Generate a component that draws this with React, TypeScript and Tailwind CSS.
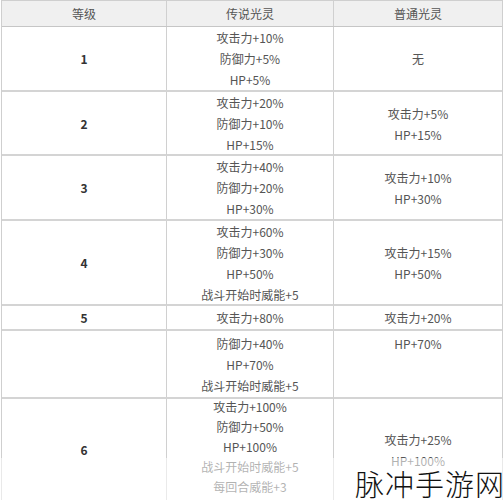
import React from "react";

type Row = {
  level: string;
  legend: string[];
  normal: string[];
  h: string;
  normalTop?: boolean;
  tight?: boolean;
};

const rows: Row[] = [
  { level: "1", legend: ["攻击力+10%", "防御力+5%", "HP+5%"], normal: ["无"], h: "h-[65px]" },
  { level: "2", legend: ["攻击力+20%", "防御力+10%", "HP+15%"], normal: ["攻击力+5%", "HP+15%"], h: "h-[64px]" },
  { level: "3", legend: ["攻击力+40%", "防御力+20%", "HP+30%"], normal: ["攻击力+10%", "HP+30%"], h: "h-[65px]" },
  {
    level: "4",
    legend: ["攻击力+60%", "防御力+30%", "HP+50%", "战斗开始时威能+5"],
    normal: ["攻击力+15%", "HP+50%"],
    h: "h-[85px]",
  },
  { level: "5", legend: ["攻击力+80%"], normal: ["攻击力+20%"], h: "h-[25px]" },
  {
    level: "",
    legend: ["防御力+40%", "HP+70%", "战斗开始时威能+5"],
    normal: ["HP+70%"],
    h: "h-[68px]",
    normalTop: true,
  },
  {
    level: "6",
    legend: ["攻击力+100%", "防御力+50%", "HP+100%", "战斗开始时威能+5", "每回合威能+3"],
    normal: ["攻击力+25%", "HP+100%"],
    h: "h-[104px]",
    tight: true,
  },
];

function Lines({ items, tight }: { items: string[]; tight?: boolean }) {
  return (
    <div className="flex flex-col items-center">
      {items.map((t, i) => (
        <span key={i} className={tight ? "leading-[20px]" : "leading-[21px]"}>
          {t}
        </span>
      ))}
    </div>
  );
}

export default function App() {
  return (
    <div
      className="relative w-[503px] h-[500px] overflow-hidden bg-white text-[12px] text-[#555]"
      style={{ fontFamily: '"Noto Sans CJK SC", "Noto Sans", sans-serif' }}
    >
      <div className="ml-[1px] w-[502px] border-l border-r border-t border-[#cfcfcf]">
        {/* header */}
        <div className="grid grid-cols-[165px_167px_168px] h-[26px] bg-[#f0f0f0] border-b border-[#c6c6c6]">
          <div className="flex items-center justify-center border-r border-[#d0d0d0]">等级</div>
          <div className="flex items-center justify-center border-r border-[#d0d0d0]">传说光灵</div>
          <div className="flex items-center justify-center">普通光灵</div>
        </div>

        {rows.map((r, i) => (
          <div
            key={i}
            className={`grid grid-cols-[165px_167px_168px] ${r.h} border-b-2 border-[#d4d4d4]`}
          >
            <div className="flex items-center justify-center border-r border-[#d0d0d0] font-bold text-[#333]">
              {r.level}
            </div>
            <div
              className={`flex justify-center border-r border-[#d0d0d0] ${r.tight ? "items-start -mt-[2px]" : "items-center"}`}
            >
              <Lines items={r.legend} tight={r.tight} />
            </div>
            <div
              className={`flex justify-center ${r.normalTop ? "items-start pt-[2px]" : "items-center"}`}
            >
              <Lines items={r.normal} />
            </div>
          </div>
        ))}
      </div>

      {/* bottom fade */}
      <div className="absolute left-0 right-0 bottom-0 h-[42px] bg-white/55" />

      {/* watermark */}
      <div
        className="absolute right-[-2px] bottom-[2px] text-[29px] leading-none text-[#111] tracking-[1px]"
        style={{ fontFamily: '"Noto Sans CJK SC", sans-serif', fontWeight: 300 }}
      >
        脉冲手游网
      </div>
    </div>
  );
}
